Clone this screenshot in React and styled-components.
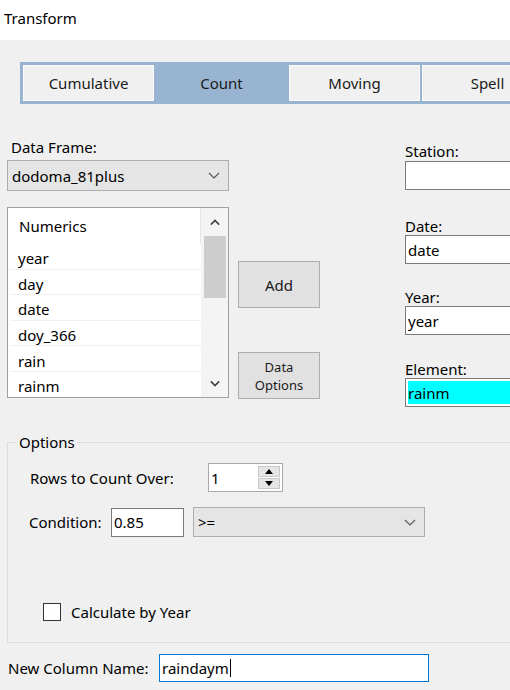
import React from "react";
import styled, { createGlobalStyle } from "styled-components";

const Global = createGlobalStyle`
  html, body { margin: 0; padding: 0; background: #f0f0f0; }
  body { font-family: "Noto Sans", "Liberation Sans", sans-serif; font-size: 15px; color: #000; }
  #root { width: 510px; height: 690px; overflow: hidden; }
`;

const Page = styled.div`
  width: 510px;
  height: 690px;
  overflow: hidden;
  background: #f0f0f0;
  display: flex;
  flex-direction: column;
`;

const TitleBar = styled.div`
  height: 40px;
  flex-shrink: 0;
  background: #fff;
  padding: 8px 0 0 4px;
  box-sizing: border-box;
  line-height: 20px;
`;

const TabStrip = styled.div`
  margin: 22px 0 0 20px;
  align-self: flex-start;
  width: max-content;
  display: flex;
  gap: 2px;
  padding: 3px;
  background: #99b4d1;
  flex-shrink: 0;
`;

const Tab = styled.div`
  width: 131px;
  height: 36px;
  box-sizing: border-box;
  flex-shrink: 0;
  display: flex;
  align-items: center;
  justify-content: center;
  background: ${(p) => (p.$active ? "#99b4d1" : "#f0f0f0")};
  border: 1px solid ${(p) => (p.$active ? "#99b4d1" : "#fbfbfb")};
  color: #1a1a1a;
`;

const MainRow = styled.div`
  margin-top: 34px;
  padding-left: 7px;
  display: flex;
  align-items: flex-start;
  flex-shrink: 0;
`;

const LeftCol = styled.div`
  width: 222px;
  flex-shrink: 0;
  display: flex;
  flex-direction: column;
`;

const FieldLabel = styled.div`
  line-height: 18px;
  padding-left: ${(p) => p.$indent || 0}px;
  margin-top: ${(p) => p.$mt || 0}px;
  white-space: nowrap;
`;

const Combo = styled.div`
  margin-top: ${(p) => p.$mt || 0}px;
  margin-left: ${(p) => p.$ml || 0}px;
  width: ${(p) => p.$w}px;
  height: ${(p) => p.$h}px;
  box-sizing: border-box;
  flex-shrink: 0;
  background: #e5e5e5;
  border: 1px solid #adadad;
  display: flex;
  align-items: center;
  justify-content: space-between;
  padding: 0 8px 0 4px;
`;

const ListBox = styled.div`
  margin-top: 16px;
  height: 191px;
  box-sizing: border-box;
  border: 1px solid #a0a0a0;
  background: #fff;
  display: flex;
  overflow: hidden;
`;

const ListBody = styled.div`
  flex: 1;
  display: flex;
  flex-direction: column;
  padding-left: 2px;
`;

const ListHeader = styled.div`
  height: 36px;
  flex-shrink: 0;
  display: flex;
  align-items: center;
  padding-left: 9px;
  border-right: 1px solid #e5e5e5;
`;

const ListItem = styled.div`
  height: 25.6px;
  flex-shrink: 0;
  box-sizing: border-box;
  display: flex;
  align-items: center;
  padding: 4px 0 0 8px;
  border-bottom: 1px solid #f0f0f0;
`;

const ScrollBar = styled.div`
  width: 27px;
  flex-shrink: 0;
  background: #f4f4f4;
  display: flex;
  flex-direction: column;
  align-items: center;
`;

const ScrollArrow = styled.div`
  height: 28px;
  width: 100%;
  display: flex;
  align-items: center;
  justify-content: center;
`;

const ScrollThumb = styled.div`
  width: 22px;
  height: 62px;
  background: #cdcdcd;
`;

const ScrollTrack = styled.div`
  flex: 1;
`;

const MidCol = styled.div`
  width: 82px;
  margin-left: 9px;
  flex-shrink: 0;
  display: flex;
  flex-direction: column;
`;

const Button = styled.div`
  margin-top: ${(p) => p.$mt}px;
  height: 47px;
  box-sizing: border-box;
  background: #e1e1e1;
  border: 1px solid #adadad;
  display: flex;
  flex-direction: column;
  align-items: center;
  justify-content: center;
  font-size: ${(p) => (p.$small ? 13 : 15)}px;
  line-height: 18px;
  text-align: center;
  color: #1a1a1a;
`;

const RightCol = styled.div`
  margin-left: 85px;
  width: 130px;
  flex-shrink: 0;
  display: flex;
  flex-direction: column;
`;

const TextBox = styled.div`
  margin-top: ${(p) => p.$mt || 0}px;
  margin-left: ${(p) => p.$ml || 0}px;
  width: ${(p) => (p.$w ? `${p.$w}px` : "auto")};
  height: ${(p) => p.$h || 29}px;
  box-sizing: border-box;
  flex-shrink: 0;
  border: 1px solid ${(p) => p.$border || "#7a7a7a"};
  background: ${(p) => p.$bg || "#fff"};
  box-shadow: ${(p) => (p.$bg ? "inset 0 0 0 2px #fff" : "none")};
  display: flex;
  align-items: center;
  padding-left: 2px;
  white-space: nowrap;
`;

const Caret = styled.span`
  display: inline-block;
  width: 1px;
  height: 18px;
  background: #000;
  margin-left: 1px;
`;

const Options = styled.fieldset`
  margin: 26px -30px 0 7px;
  padding: 0 0 21px 0;
  border: 1px solid #dcdcdc;
  min-width: 0;
  flex-shrink: 0;
`;

const Legend = styled.legend`
  margin-left: 9px;
  padding: 0 2px;
  line-height: 18px;
`;

const FormRow = styled.div`
  margin-top: ${(p) => p.$mt}px;
  padding-left: ${(p) => p.$pl}px;
  display: flex;
  align-items: center;
`;

const RowLabel = styled.div`
  width: ${(p) => p.$w}px;
  flex-shrink: 0;
  white-space: nowrap;
  line-height: 18px;
`;

const Spin = styled.div`
  width: 75px;
  height: 29px;
  box-sizing: border-box;
  border: 1px solid #a9a9a9;
  background: #fff;
  display: flex;
  align-items: center;
  justify-content: space-between;
  padding: 0 2px 0 2px;
`;

const SpinButtons = styled.div`
  width: 22px;
  height: 23px;
  display: flex;
  flex-direction: column;
  gap: 1px;
`;

const SpinButton = styled.div`
  flex: 1;
  background: #e5e5e5;
  border: 1px solid #c8c8c8;
  display: flex;
  align-items: center;
  justify-content: center;
`;

const CheckBox = styled.div`
  width: 18px;
  height: 18px;
  box-sizing: border-box;
  border: 1px solid #333;
  background: #fff;
  flex-shrink: 0;
  margin-right: 10px;
`;

const Chevron = ({ up, bold, w = 12, h = 7, color = "#555" }) => (
  <svg width={w} height={h} viewBox="0 0 12 7">
    <polyline
      points={up ? "1,6 6,1 11,6" : "1,1 6,6 11,1"}
      fill="none"
      stroke={color}
      strokeWidth={bold ? 1.9 : 1.1}
    />
  </svg>
);

const Tri = ({ up }) => (
  <svg width="8" height="5" viewBox="0 0 8 5">
    <polygon points={up ? "0,5 4,0 8,5" : "0,0 8,0 4,5"} fill="#000" />
  </svg>
);

const items = ["year", "day", "date", "doy_366", "rain", "rainm"];

export default function App() {
  return (
    <Page>
      <Global />
      <TitleBar>Transform</TitleBar>
      <TabStrip>
        <Tab>Cumulative</Tab>
        <Tab $active>Count</Tab>
        <Tab>Moving</Tab>
        <Tab>Spell</Tab>
      </TabStrip>

      <MainRow>
        <LeftCol>
          <FieldLabel $indent={4}>Data Frame:</FieldLabel>
          <Combo $mt={4} $w={222} $h={31}>
            <span>dodoma_81plus</span>
            <Chevron />
          </Combo>
          <ListBox>
            <ListBody>
              <ListHeader>Numerics</ListHeader>
              {items.map((it) => (
                <ListItem key={it}>{it}</ListItem>
              ))}
            </ListBody>
            <ScrollBar>
              <ScrollArrow>
                <Chevron up bold w={10} h={7} color="#404040" />
              </ScrollArrow>
              <ScrollThumb />
              <ScrollTrack />
              <ScrollArrow>
                <Chevron bold w={10} h={7} color="#404040" />
              </ScrollArrow>
            </ScrollBar>
          </ListBox>
        </LeftCol>

        <MidCol>
          <Button $mt={123}>Add</Button>
          <Button $mt={44} $small>
            <span>Data</span>
            <span>Options</span>
          </Button>
        </MidCol>

        <RightCol>
          <FieldLabel $mt={4}>Station:</FieldLabel>
          <TextBox $mt={1} $h={29}></TextBox>
          <FieldLabel $mt={27}>Date:</FieldLabel>
          <TextBox>date</TextBox>
          <FieldLabel $mt={24}>Year:</FieldLabel>
          <TextBox>year</TextBox>
          <FieldLabel $mt={25}>Element:</FieldLabel>
          <TextBox $bg="#00ffff">rainm</TextBox>
        </RightCol>
      </MainRow>

      <Options>
        <Legend>Options</Legend>
        <FormRow $mt={12} $pl={22}>
          <RowLabel $w={178}>Rows to Count Over:</RowLabel>
          <Spin>
            <span>1</span>
            <SpinButtons>
              <SpinButton>
                <Tri up />
              </SpinButton>
              <SpinButton>
                <Tri />
              </SpinButton>
            </SpinButtons>
          </Spin>
        </FormRow>
        <FormRow $mt={15} $pl={21}>
          <RowLabel $w={82}>Condition:</RowLabel>
          <TextBox $w={73} $h={29}>0.85</TextBox>
          <Combo $ml={9} $w={232} $h={30}>
            <span>&gt;=</span>
            <Chevron />
          </Combo>
        </FormRow>
        <FormRow $mt={66} $pl={35}>
          <CheckBox />
          <RowLabel>Calculate by Year</RowLabel>
        </FormRow>
      </Options>

      <FormRow $mt={11} $pl={8}>
        <RowLabel $w={151}>New Column Name:</RowLabel>
        <TextBox $w={270} $h={28} $border="#0078d7">
          raindaym
          <Caret />
        </TextBox>
      </FormRow>
    </Page>
  );
}
